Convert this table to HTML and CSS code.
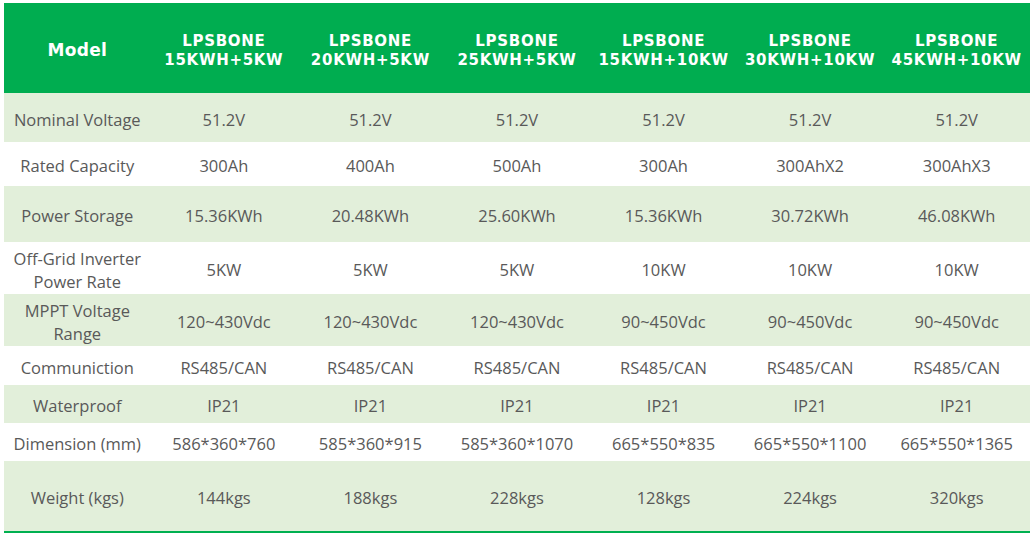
FILE: index.html
```html
<!DOCTYPE html>
<html>
<head>
<meta charset="utf-8">
<link rel="stylesheet" href="styles.css">
</head>
<body>
<table class="spec">
  <thead>
    <tr class="head">
      <th class="model">Model</th>
      <th>LPSBONE<br>15KWH+5KW</th>
      <th>LPSBONE<br>20KWH+5KW</th>
      <th>LPSBONE<br>25KWH+5KW</th>
      <th>LPSBONE<br>15KWH+10KW</th>
      <th>LPSBONE<br>30KWH+10KW</th>
      <th>LPSBONE<br>45KWH+10KW</th>
    </tr>
  </thead>
  <tbody>
    <tr class="g r1"><td>Nominal Voltage</td><td>51.2V</td><td>51.2V</td><td>51.2V</td><td>51.2V</td><td>51.2V</td><td>51.2V</td></tr>
    <tr class="w r2"><td>Rated Capacity</td><td>300Ah</td><td>400Ah</td><td>500Ah</td><td>300Ah</td><td>300AhX2</td><td>300AhX3</td></tr>
    <tr class="g r3"><td>Power Storage</td><td>15.36KWh</td><td>20.48KWh</td><td>25.60KWh</td><td>15.36KWh</td><td>30.72KWh</td><td>46.08KWh</td></tr>
    <tr class="w r4"><td>Off-Grid Inverter<br>Power Rate</td><td>5KW</td><td>5KW</td><td>5KW</td><td>10KW</td><td>10KW</td><td>10KW</td></tr>
    <tr class="g r5"><td>MPPT Voltage<br>Range</td><td>120~430Vdc</td><td>120~430Vdc</td><td>120~430Vdc</td><td>90~450Vdc</td><td>90~450Vdc</td><td>90~450Vdc</td></tr>
    <tr class="w r6"><td>Communiction</td><td>RS485/CAN</td><td>RS485/CAN</td><td>RS485/CAN</td><td>RS485/CAN</td><td>RS485/CAN</td><td>RS485/CAN</td></tr>
    <tr class="g r7"><td>Waterproof</td><td>IP21</td><td>IP21</td><td>IP21</td><td>IP21</td><td>IP21</td><td>IP21</td></tr>
    <tr class="w r8"><td>Dimension (mm)</td><td>586*360*760</td><td>585*360*915</td><td>585*360*1070</td><td>665*550*835</td><td>665*550*1100</td><td>665*550*1365</td></tr>
    <tr class="g r9"><td>Weight (kgs)</td><td>144kgs</td><td>188kgs</td><td>228kgs</td><td>128kgs</td><td>224kgs</td><td>320kgs</td></tr>
  </tbody>
</table>
</body>
</html>
```
FILE: styles.css
```css
html, body {
  margin: 0;
  padding: 0;
  background: #ffffff;
}
body {
  padding: 3px 5px 0 4px;
}
.spec {
  width: 1026px;
  table-layout: fixed;
  border-collapse: collapse;
  border-spacing: 0;
  font-family: "Open Sans", "Liberation Sans", sans-serif;
  font-size: 16.5px;
  color: #595959;
  border-bottom: 2px solid #00b050;
}
.spec th, .spec td {
  padding: 3px 0 0 0;
  text-align: center;
  vertical-align: middle;
}
.head {
  height: 90px;
  background: #00ad50;
}
.head th {
  padding-top: 5px;
  color: #ffffff;
  font-family: "DejaVu Sans", "Liberation Sans", sans-serif;
  font-weight: bold;
  font-size: 15px;
  letter-spacing: 0.7px;
  line-height: 19px;
}
.head th.model {
  font-size: 17px;
  letter-spacing: 0.3px;
}
.spec td {
  line-height: 23px;
}
.g { background: #e2efda; }
.w { background: #ffffff; }
.r1 { height: 49px; }
.r2 { height: 44px; }
.r3 { height: 56px; }
.r4 { height: 52px; }
.r5 { height: 52px; }
.r6 { height: 39px; }
.r7 { height: 38px; }
.r8 { height: 38px; }
.r9 { height: 71px; }
```
